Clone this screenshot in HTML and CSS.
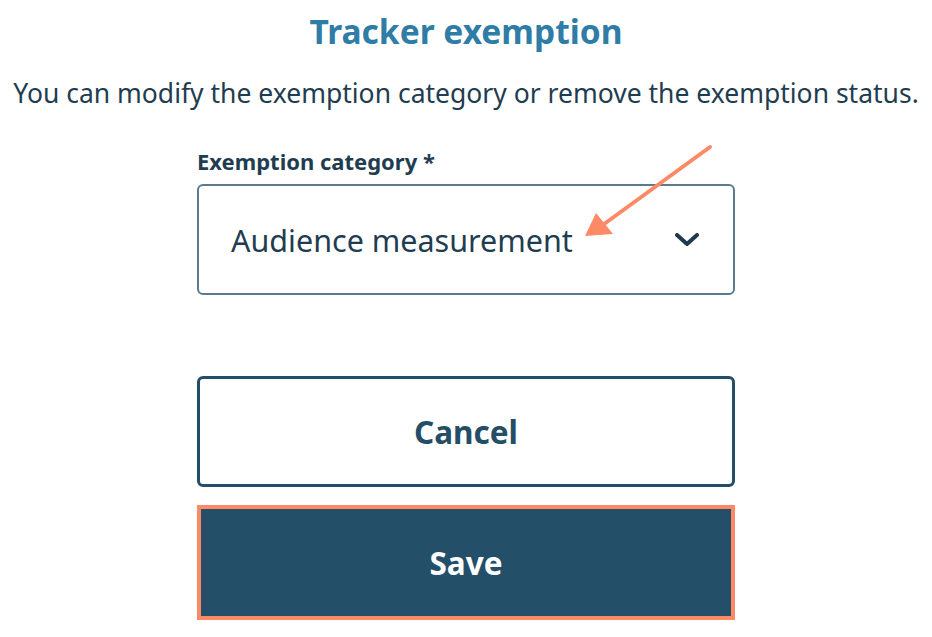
FILE: index.html
```html
<!DOCTYPE html>
<html lang="en">
  <head>
    <meta charset="UTF-8" />
    <meta name="viewport" content="width=device-width, initial-scale=1.0" />
    <title>Tracker exemption</title>
    <link rel="stylesheet" href="styles.css">
  </head>
  <body>
    <div class="page">
      <h1 class="title">Tracker exemption</h1>
      <p class="intro">You can modify the exemption category or remove the exemption status.</p>

      <form class="form">
        <label class="label" for="category">Exemption category *</label>
        <div class="select" id="category">
          <span>Audience measurement</span>
          <svg class="chevron" width="24" height="14" viewBox="0 0 24 14">
            <polyline points="2,2 12,11 22,2" fill="none" stroke="#1e3a4c" stroke-width="4" stroke-linecap="round" stroke-linejoin="round" />
          </svg>
        </div>

        <button type="button" class="btn btn-outline">Cancel</button>
        <button type="button" class="btn btn-primary">Save</button>
      </form>

      <svg class="pointer" width="160" height="120" viewBox="0 0 160 120">
        <line x1="150" y1="8" x2="40" y2="88" stroke="#fd8a66" stroke-width="4" stroke-linecap="round" />
        <polygon points="25,97 36,74 53,95" fill="#fd8a66" />
      </svg>
    </div>
  </body>
</html>
```

FILE: styles.css
```css
body {
  margin: 0;
  background-color: white;
  font-family: "Noto Sans", "Open Sans", sans-serif;
  color: #1f3d50;
}

.page {
  position: relative;
  text-align: center;
}

.title {
  margin: 0;
  padding-top: 9px;
  font-size: 33.5px;
  font-weight: 700;
  color: #2f7da6;
  line-height: 44px;
}

.intro {
  margin: 23px 0 0;
  font-size: 26.5px;
  line-height: 34px;
}

.form {
  width: 538px;
  margin: 0 auto;
  padding-top: 37px;
  text-align: left;
}

.label {
  display: block;
  font-size: 22px;
  font-weight: 700;
  line-height: 28px;
  margin-bottom: 9px;
}

.select {
  height: 107px;
  border: 2px solid #587b8d;
  border-radius: 6px;
  display: flex;
  align-items: center;
  justify-content: space-between;
  padding: 0 34px 0 32px;
  font-size: 30.5px;
}

.chevron {
  margin-top: 1px;
}

.btn {
  display: block;
  width: 100%;
  font-family: inherit;
  font-size: 31.5px;
  font-weight: 700;
  cursor: pointer;
}

.btn-outline {
  margin-top: 81px;
  height: 111px;
  background-color: white;
  color: #234e66;
  border: 3px solid #234e66;
  border-radius: 6px;
}

.btn-primary {
  margin-top: 18px;
  height: 115px;
  background-color: #234f68;
  color: white;
  border: 4px solid #fd8a66;
  border-radius: 0;
}

.pointer {
  position: absolute;
  left: 560px;
  top: 139px;
}
```
